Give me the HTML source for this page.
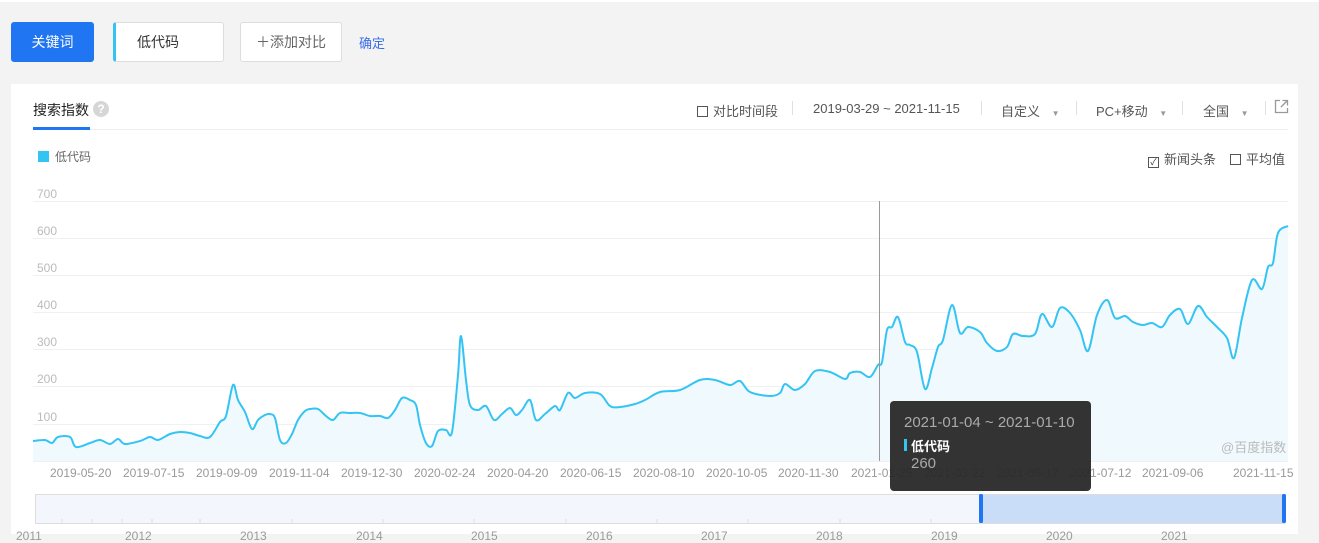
<!DOCTYPE html>
<html><head><meta charset="utf-8"><style>
*{margin:0;padding:0;box-sizing:border-box}
body{width:1319px;height:534px;overflow:hidden;background:#f3f3f3;font-family:"Liberation Sans","Noto Sans CJK SC",sans-serif;position:relative;color:#333}
.abs{position:absolute}
.btn{position:absolute;border:1px solid #ddd;background:#fff;border-radius:3px;font-size:14px;display:flex;align-items:center}
.sep{position:absolute;top:101px;width:1px;height:14px;background:#e0e0e0}
.t{position:absolute;font-size:13px;color:#555;white-space:nowrap}
.cb{display:inline-block;width:11px;height:11px;border:1px solid #555;vertical-align:-1px;margin-right:5px;position:relative}
.ax{position:absolute;font-size:12px;color:#bbb}
.xl{position:absolute;top:466px;font-size:12px;color:#999;white-space:nowrap}
.yr{position:absolute;top:530px;font-size:12px;color:#999;line-height:12px}
</style></head><body>
<div class="abs" style="left:0;top:0;width:1319px;height:2px;background:#fff"></div>
<div class="btn" style="left:11px;top:22px;width:83px;height:40px;background:#2076f2;border-color:#2076f2;color:#fff;justify-content:center">关键词</div>
<div class="btn" style="left:113px;top:22px;width:111px;height:40px;padding-left:21px;border-left:3px solid #34c4f4;color:#333">低代码</div>
<div class="btn" style="left:240px;top:22px;width:102px;height:40px;justify-content:center;color:#666">＋添加对比</div>
<div class="t" style="left:359px;top:33px;color:#3a6ee8">确定</div>

<div class="abs" style="left:11px;top:84px;width:1287px;height:450px;background:#fff"></div>
<div class="abs" style="left:1307px;top:84px;width:12px;height:450px;background:#f3f3f3"></div>
<div class="t" style="left:33px;top:100px;font-size:14px;color:#222">搜索指数</div>
<div class="abs" style="left:93px;top:101px;width:16px;height:16px;border-radius:50%;background:#d6d6d6;color:#fff;font-size:12px;text-align:center;line-height:16px;font-weight:bold">?</div>
<div class="abs" style="left:33px;top:127px;width:57px;height:3px;background:#2076f2"></div>
<div class="abs" style="left:90px;top:129px;width:1198px;height:1px;background:#eee"></div>

<div class="t" style="left:697px;top:101px"><span class="cb"></span>对比时间段</div>
<div class="sep" style="left:792px"></div>
<div class="t" style="left:813px;top:101px">2019-03-29 ~ 2021-11-15</div>
<div class="sep" style="left:981px"></div>
<div class="t" style="left:1001px;top:101px">自定义 <span style="font-size:8px;color:#999;margin-left:8px">▼</span></div>
<div class="sep" style="left:1076px"></div>
<div class="t" style="left:1096px;top:101px">PC+移动 <span style="font-size:8px;color:#999;margin-left:8px">▼</span></div>
<div class="sep" style="left:1182px"></div>
<div class="t" style="left:1203px;top:101px">全国 <span style="font-size:8px;color:#999;margin-left:8px">▼</span></div>
<div class="sep" style="left:1265px"></div>
<svg class="abs" style="left:1274px;top:99px" width="15" height="15" viewBox="0 0 15 15"><path d="M6 1.5H1.5v12h12V9" fill="none" stroke="#999" stroke-width="1.3"/><path d="M8.5 1.5h5v5M13.5 1.5L7 8" fill="none" stroke="#999" stroke-width="1.3"/></svg>

<div class="abs" style="left:38px;top:151px;width:11px;height:11px;background:#34c4f4"></div>
<div class="t" style="left:55px;top:148px;font-size:12px;color:#666">低代码</div>
<div class="t" style="left:1148px;top:149px"><span class="cb" style="font-size:9px;line-height:9px;text-align:center;color:#333">✓</span>新闻头条</div>
<div class="t" style="left:1230px;top:149px"><span class="cb"></span>平均值</div>

<div class="ax" style="left:37px;top:187px">700</div>
<div class="ax" style="left:37px;top:224px">600</div>
<div class="ax" style="left:37px;top:261px">500</div>
<div class="ax" style="left:37px;top:298px">400</div>
<div class="ax" style="left:37px;top:335px">300</div>
<div class="ax" style="left:37px;top:372px">200</div>
<div class="ax" style="left:37px;top:410px">100</div>

<svg class="abs" style="left:0;top:0" width="1319" height="534">
<g stroke="#eef0f2" stroke-width="1">
<line x1="33" x2="1288" y1="201.5" y2="201.5"/><line x1="33" x2="1288" y1="238.5" y2="238.5"/><line x1="33" x2="1288" y1="275.5" y2="275.5"/><line x1="33" x2="1288" y1="312.5" y2="312.5"/><line x1="33" x2="1288" y1="349.5" y2="349.5"/><line x1="33" x2="1288" y1="386.5" y2="386.5"/><line x1="33" x2="1288" y1="424.5" y2="424.5"/><line x1="33" x2="1288" y1="461.5" y2="461.5"/>
</g>
<path id="area" fill="#f0f9fd" d=""/>
<path id="ln" fill="none" stroke="#34c4f4" stroke-width="2" d=""/>
<line x1="879.5" x2="879.5" y1="201" y2="461" stroke="#999"/>
<rect x="35.5" y="494.5" width="1249" height="29" fill="#f3f7fd" stroke="#ddd"/>
<g stroke="#ddd"><line x1="62" x2="62" y1="519" y2="524"/><line x1="92" x2="92" y1="519" y2="524"/><line x1="122" x2="122" y1="519" y2="524"/><line x1="152" x2="152" y1="519" y2="524"/><line x1="200" x2="200" y1="519" y2="524"/><line x1="292" x2="292" y1="519" y2="524"/><line x1="383" x2="383" y1="519" y2="524"/><line x1="474" x2="474" y1="519" y2="524"/><line x1="566" x2="566" y1="519" y2="524"/><line x1="657" x2="657" y1="519" y2="524"/><line x1="748" x2="748" y1="519" y2="524"/><line x1="840" x2="840" y1="519" y2="524"/><line x1="931" x2="931" y1="519" y2="524"/><line x1="1023" x2="1023" y1="519" y2="524"/><line x1="1114" x2="1114" y1="519" y2="524"/><line x1="1205" x2="1205" y1="519" y2="524"/></g>
<rect x="981" y="495" width="303" height="28" fill="#c9ddf9"/>
<rect x="979" y="494" width="4" height="29" rx="1.5" fill="#2076f2"/>
<rect x="1282" y="494" width="4" height="29" rx="1.5" fill="#2076f2"/>
</svg>
<script>
var p="33,441 45,440 52,443 58,437 70,437 76,447 90,443 100,440 110,444 118,439 125,444 140,441 150,437 158,440 170,434 180,432 190,433 200,436 210,437 220,422 226,416 233,385 238,400 245,412 252,429 258,420 265,415 270,414 275,418 280,440 286,443 292,434 298,420 305,411 310,409 318,409 326,416 333,420 340,413 350,413 360,413 370,416 380,416 388,418 395,410 402,398 410,400 416,405 420,425 426,443 432,446 438,431 446,430 452,432 458,375 461,336 466,380 470,405 478,410 486,406 494,420 502,414 510,408 516,415 522,410 530,400 536,420 545,414 555,406 560,410 568,393 575,398 585,393 600,394 610,406 620,407 635,404 645,400 660,392 680,390 700,380 715,380 730,385 740,381 750,392 770,396 780,393 785,384 795,390 805,384 815,371 830,372 845,379 850,373 860,372 870,377 878,365 882,362 887,330 892,327 898,317 905,342 910,345 917,352 925,389 932,368 938,347 943,340 952,305 960,333 968,327 980,332 987,343 997,351 1007,347 1013,334 1023,336 1035,334 1042,314 1052,327 1060,308 1070,313 1080,330 1088,351 1097,315 1107,300 1115,318 1125,316 1133,322 1143,325 1152,323 1162,327 1170,315 1180,309 1188,324 1198,306 1207,317 1217,327 1227,338 1234,358 1242,318 1252,280 1262,289 1268,267 1273,263 1278,233 1288,226".split(" ").map(function(s){return s.split(",").map(Number)});
var d="M"+p[0][0]+","+p[0][1];
for(var i=0;i<p.length-1;i++){var a=p[Math.max(i-1,0)],b=p[i],c=p[i+1],e=p[Math.min(i+2,p.length-1)];
d+=" C"+(b[0]+(c[0]-a[0])/6)+","+(b[1]+(c[1]-a[1])/6)+" "+(c[0]-(e[0]-b[0])/6)+","+(c[1]-(e[1]-b[1])/6)+" "+c[0]+","+c[1];}
document.getElementById("ln").setAttribute("d",d);
document.getElementById("area").setAttribute("d",d+" L1288,461 L33,461 Z");
</script>
<div class="xl" style="left:50px">2019-05-20</div><div class="xl" style="left:123px">2019-07-15</div><div class="xl" style="left:196px">2019-09-09</div><div class="xl" style="left:269px">2019-11-04</div><div class="xl" style="left:341px">2019-12-30</div><div class="xl" style="left:414px">2020-02-24</div><div class="xl" style="left:487px">2020-04-20</div><div class="xl" style="left:560px">2020-06-15</div><div class="xl" style="left:633px">2020-08-10</div><div class="xl" style="left:706px">2020-10-05</div><div class="xl" style="left:778px">2020-11-30</div><div class="xl" style="left:851px">2021-01-25</div><div class="xl" style="left:924px">2021-03-22</div><div class="xl" style="left:997px">2021-05-17</div><div class="xl" style="left:1070px">2021-07-12</div><div class="xl" style="left:1142px">2021-09-06</div><div class="xl" style="left:1233px">2021-11-15</div>
<div class="t" style="left:1221px;top:437px;color:#bbb">@百度指数</div>
<div class="yr" style="left:16px">2011</div><div class="yr" style="left:125px">2012</div><div class="yr" style="left:240px">2013</div><div class="yr" style="left:356px">2014</div><div class="yr" style="left:471px">2015</div><div class="yr" style="left:586px">2016</div><div class="yr" style="left:701px">2017</div><div class="yr" style="left:816px">2018</div><div class="yr" style="left:931px">2019</div><div class="yr" style="left:1046px">2020</div><div class="yr" style="left:1161px">2021</div>

<div class="abs" style="left:890px;top:401px;width:201px;height:90px;background:rgba(40,40,40,.95);border-radius:4px"></div>
<div class="t" style="left:904px;top:414px;font-size:15px;color:#aaa">2021-01-04 ~ 2021-01-10</div>
<div class="abs" style="left:904px;top:439px;width:3px;height:12px;background:#34c4f4"></div>
<div class="t" style="left:911px;top:436px;font-size:13px;color:#fff;font-weight:bold">低代码</div>
<div class="t" style="left:911px;top:455px;font-size:15px;color:#aaa">260</div>
</body></html>
